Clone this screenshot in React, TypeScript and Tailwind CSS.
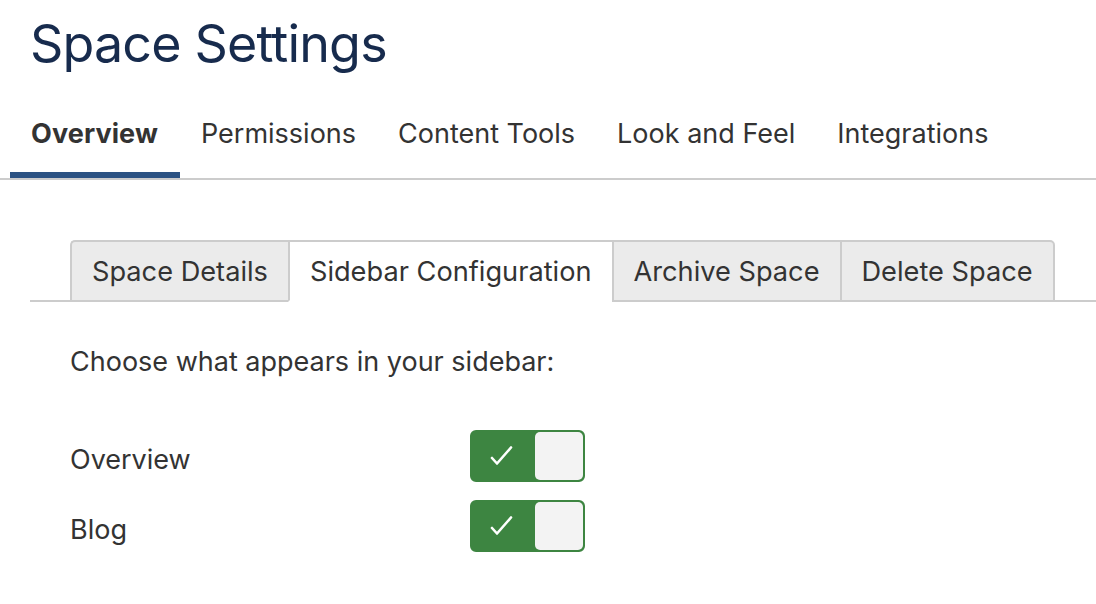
import React from "react";

const font = { fontFamily: "Inter, 'Noto Sans', sans-serif" };

function Toggle() {
  return (
    <div className="flex h-[52px] w-[115px] items-center rounded-[6px] border-2 border-[#3d8541] bg-[#3d8541]">
      <div className="flex h-full flex-1 items-center justify-center">
        <svg width="25" height="20" viewBox="0 0 25 20" className="ml-[-4px] mt-[-1px]">
          <polyline
            points="3,12 8,17.5 22,1.5"
            fill="none"
            stroke="#ffffff"
            strokeWidth="2.6"
            strokeLinecap="round"
            strokeLinejoin="round"
          />
        </svg>
      </div>
      <div className="h-[48px] w-[48px] rounded-[5px] bg-[#f3f3f3]" />
    </div>
  );
}

export default function App() {
  const tabs = ["Overview", "Permissions", "Content Tools", "Look and Feel", "Integrations"];
  const subTabs = ["Space Details", "Sidebar Configuration", "Archive Space", "Delete Space"];
  return (
    <div className="min-h-[604px] w-[1096px] bg-white text-[#333333]" style={font}>
      <h1 className="pl-[30px] pt-[18px] text-[52px] font-normal leading-[52px] tracking-[-0.85px] text-[#172b4d]">
        Space Settings
      </h1>
      <nav className="mt-[28px] flex border-b-2 border-[#cccccc] pl-[10px]">
        {tabs.map((t, i) => (
          <div
            key={t}
            className={
              i === 0
                ? "border-b-[6px] border-[#2b5283] pl-[21px] pr-[22px] pb-[25px] pt-[23px] text-[27px] font-bold leading-[26px] tracking-[0.1px] text-[#333333]"
                : "border-b-[6px] border-transparent px-[21px] pb-[25px] pt-[23px] text-[27px] font-normal leading-[26px] text-[#333333]"
            }
          >
            {t}
          </div>
        ))}
      </nav>
      <div className="ml-[30px] mt-[60px] flex border-b-2 border-[#cccccc] pl-[40px]">
        {subTabs.map((t, i) => {
          const active = i === 1;
          const first = i === 0;
          const last = i === subTabs.length - 1;
          return (
            <div
              key={t}
              className={[
                "-mb-[2px] flex h-[62px] items-center border-t-2 border-[#cccccc] px-[20px] pt-[2px] text-[27.2px] leading-[26px] text-[#333333]",
                active ? "bg-white border-b-2 border-b-white" : "bg-[#ebebeb] border-b-2 border-b-[#cccccc]",
                first ? "border-l-2 rounded-tl-[5px]" : "border-l-2",
                last ? "border-r-2 rounded-tr-[5px]" : "",
              ].join(" ")}
            >
              {t}
            </div>
          );
        })}
      </div>
      <div className="pl-[70px]">
        <p className="mt-[47px] text-[27px] leading-[26px] text-[#333333]">Choose what appears in your sidebar:</p>
        <div className="mt-[55px] flex items-start">
          <div className="mt-[17px] w-[400px] text-[27px] leading-[26px]">Overview</div>
          <Toggle />
        </div>
        <div className="mt-[18px] flex items-start">
          <div className="mt-[17px] w-[400px] text-[27px] leading-[26px]">Blog</div>
          <Toggle />
        </div>
      </div>
    </div>
  );
}
